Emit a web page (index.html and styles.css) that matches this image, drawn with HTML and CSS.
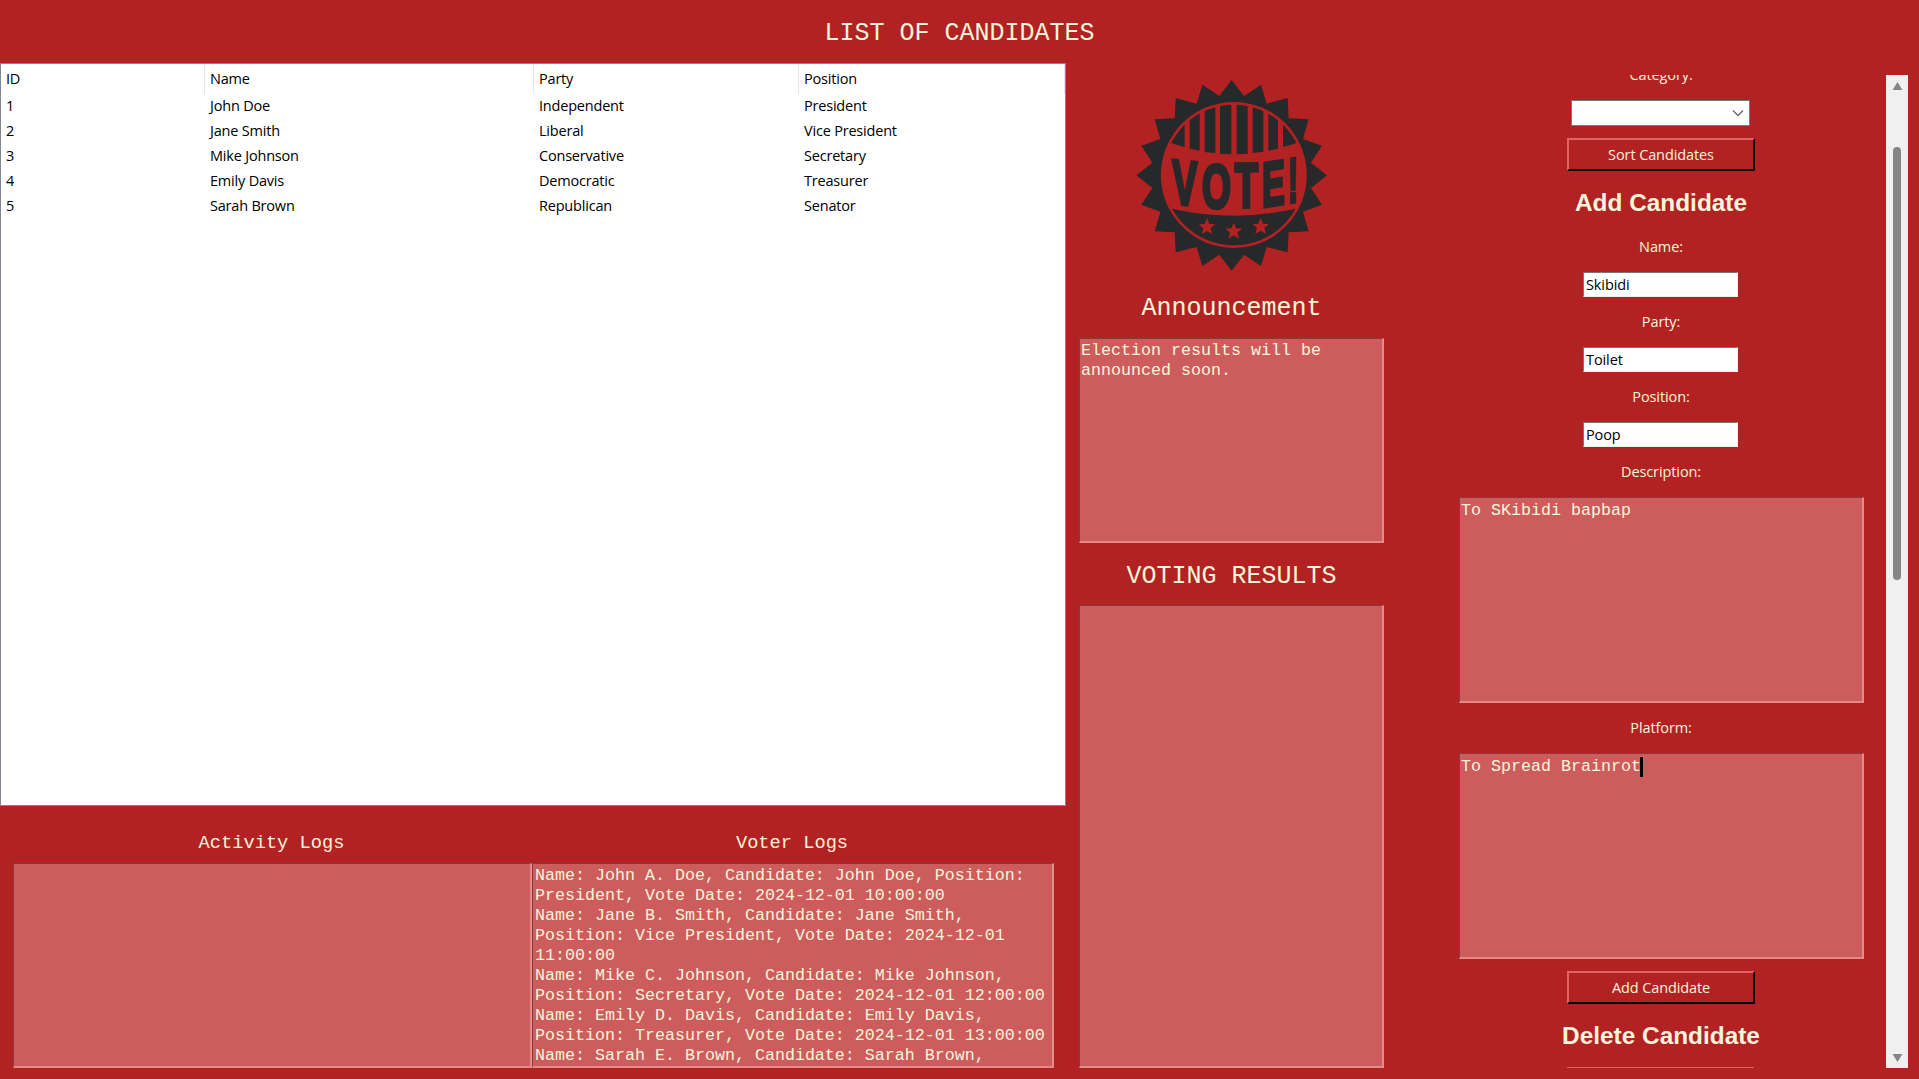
FILE: index.html
```html
<!DOCTYPE html>
<html lang="en">
<head>
<meta charset="utf-8">
<title>List of Candidates</title>
<link rel="stylesheet" href="styles.css">
</head>
<body>
<div class="app">
  <h1 class="title">LIST OF CANDIDATES</h1>
  <main class="columns">
    <section class="left">
      <div class="tree">
        <div class="tree-row tree-head"><span>ID</span><span>Name</span><span>Party</span><span>Position</span></div>
        <div class="tree-row"><span>1</span><span>John Doe</span><span>Independent</span><span>President</span></div>
        <div class="tree-row"><span>2</span><span>Jane Smith</span><span>Liberal</span><span>Vice President</span></div>
        <div class="tree-row"><span>3</span><span>Mike Johnson</span><span>Conservative</span><span>Secretary</span></div>
        <div class="tree-row"><span>4</span><span>Emily Davis</span><span>Democratic</span><span>Treasurer</span></div>
        <div class="tree-row"><span>5</span><span>Sarah Brown</span><span>Republican</span><span>Senator</span></div>
      </div>
      <div class="logs">
        <div class="log">
          <h3 class="log-title">Activity Logs</h3>
          <div class="textbox"></div>
        </div>
        <div class="log">
          <h3 class="log-title">Voter Logs</h3>
          <div class="textbox voter">Name: John A. Doe, Candidate: John Doe, Position:
President, Vote Date: 2024-12-01 10:00:00
Name: Jane B. Smith, Candidate: Jane Smith,
Position: Vice President, Vote Date: 2024-12-01
11:00:00
Name: Mike C. Johnson, Candidate: Mike Johnson,
Position: Secretary, Vote Date: 2024-12-01 12:00:00
Name: Emily D. Davis, Candidate: Emily Davis,
Position: Treasurer, Vote Date: 2024-12-01 13:00:00
Name: Sarah E. Brown, Candidate: Sarah Brown,</div>
        </div>
      </div>
    </section>

    <section class="middle">
      <svg class="badge" viewBox="45 27 579 577" aria-label="Vote">
        <defs>
          <clipPath id="disc"><circle cx="341.5" cy="315" r="211"/></clipPath>
          <path id="star" d="M0-26 7-9 25-8 11 3.500 16 22 0 12-16 22-11 3.500-25-8-7-9z"/>
        </defs>
        <path class="ink" d="M335 30 372 78 423 44 440 101 503 84 506 145 566 148 549 207 606 227 573 278 621 316 573 354 606 404 549 425 566 484 506 487 503 547 440 531 423 588 372 554 335 602 298 554 247 588 230 531 167 547 164 487 104 484 121 425 64 404 97 354 49 316 97 278 64 227 121 207 104 148 164 145 167 84 230 101 247 44 298 78z"/>
        <circle class="paper" cx="341.500" cy="315" r="219"/>
        <g clip-path="url(#disc)">
          <path class="ink" d="M120 90H194V231Q172 226 153 219L120 219zM209 90H239V242L209 236zM254 90H286V250L254 246zM300 90H334V253L300 252zM350 90H383V251L350 253zM398 90H430V245L398 249zM445 90H474V236L445 242zM489 90H560V219H529Q510 226 489 231z"/>
          <path class="ink" d="M120 404 157 416Q341 458 527 416L560 404V560H120z"/>
        </g>
        <use class="paper" href="#star" x="261" y="471"/>
        <use class="paper" href="#star" x="341" y="484"/>
        <use class="paper" href="#star" x="422" y="470"/>
        <g class="vote">
          <text transform="translate(157 400) skewY(6)" textLength="75" lengthAdjust="spacingAndGlyphs">V</text>
          <text transform="translate(246 413)" textLength="87" lengthAdjust="spacingAndGlyphs">O</text>
          <text transform="translate(344.5 412) skewY(-1)" textLength="70" lengthAdjust="spacingAndGlyphs">T</text>
          <text transform="translate(425.5 411) skewY(-9)" textLength="68" lengthAdjust="spacingAndGlyphs">E</text>
          <text transform="translate(503 398) skewY(-7)" textLength="30" lengthAdjust="spacingAndGlyphs">!</text>
        </g>
      </svg>
      <h2 class="heading announcement-title">Announcement</h2>
      <div class="textbox announcement">Election results will be
announced soon.</div>
      <h2 class="heading results-title">VOTING RESULTS</h2>
      <div class="textbox results"></div>
    </section>

    <section class="right">
      <div class="form">
        <span class="label category">Category:</span>
        <div class="combo"><svg viewBox="0 0 12 8"><path d="M1 1.500 6 6.500 11 1.500"/></svg></div>
        <div class="button">Sort Candidates</div>
        <h2 class="form-title">Add Candidate</h2>
        <span class="label">Name:</span>
        <div class="entry">Skibidi</div>
        <span class="label">Party:</span>
        <div class="entry">Toilet</div>
        <span class="label">Position:</span>
        <div class="entry">Poop</div>
        <span class="label">Description:</span>
        <div class="textbox area">To SKibidi bapbap</div>
        <span class="label label-platform">Platform:</span>
        <div class="textbox area">To Spread Brainrot<i class="caret"></i></div>
        <div class="button">Add Candidate</div>
        <h2 class="form-title">Delete Candidate</h2>
        <div class="button"></div>
      </div>
      <div class="scrollbar">
        <svg class="arrow" viewBox="0 0 12 9"><path d="M6 0 11.500 9H.5z"/></svg>
        <div class="thumb"></div>
        <svg class="arrow arrow-down" viewBox="0 0 12 9"><path d="M.5 0H11.500L6 9z"/></svg>
      </div>
    </section>
  </main>
</div>
</body>
</html>
```
FILE: styles.css
```css
* { box-sizing: border-box; }
body {
  margin: 0;
  background: #b22222;
  color: #f5f5dc;
  font-family: "Open Sans", "Noto Sans", sans-serif;
  font-size: 14.5px;
  letter-spacing: -0.1px;
}
h1, h2, h3 { margin: 0; font-weight: 400; letter-spacing: 0; }
.app {
  width: 1919px;
  height: 1079px;
  display: flex;
  flex-direction: column;
  overflow: hidden;
}
.title, .heading {
  font: 25px/28px "Liberation Mono", monospace;
  text-align: center;
}
.title { height: 63px; padding-top: 20px; flex: none; }
.columns {
  flex: 1;
  display: grid;
  grid-template-columns: 1066px 331px 1fr;
  min-height: 0;
}

.left { display: flex; flex-direction: column; min-height: 0; }
.tree {
  height: 743px;
  flex: none;
  background: #fff;
  border: 1px solid #828790;
  color: #000;
  letter-spacing: -0.2px;
}
.tree-row {
  display: grid;
  grid-template-columns: 204px 329px 265px 1fr;
  height: 25px;
  line-height: 23px;
}
.tree-row span { padding-left: 5px; }
.tree-head { height: 30px; line-height: 29px; }
.tree-head span { border-right: 1px solid #e5e5e5; }

.logs {
  display: grid;
  grid-template-columns: 519px 522px;
  padding: 22px 12px 0 13px;
}
.log-title {
  font: 18.7px/28px "Liberation Mono", monospace;
  height: 35px;
  padding: 1px 2px 0 0;
  text-align: center;
}
.textbox {
  height: 205px;
  padding: 2px 1px;
  background: #cd5c5c;
  border: 2px solid;
  border-width: 1px 2px 2px 1px;
  border-color: #853b3b #e68a8a #e68a8a #853b3b;
  font: 16.67px/20px "Liberation Mono", "Courier New", monospace;
  letter-spacing: 0;
  white-space: pre;
  overflow: hidden;
}
.voter { padding-left: 2px; }

.middle {
  display: flex;
  flex-direction: column;
  padding: 16px 13px 0;
}
.badge { width: 193px; height: 192.300px; align-self: center; margin-right: 1px; flex: none; }
.ink { fill: #27282a; }
.paper { fill: #b22222; }
.vote text {
  font: 700 188px "Liberation Sans", sans-serif;
  letter-spacing: 0;
  fill: #27282a;
  stroke: #27282a;
  stroke-width: 11;
}
.announcement-title { margin-top: 22px; height: 45px; padding-top: 2px; }
.announcement { height: 205px; flex: none; }
.results-title { padding-top: 20px; height: 62px; }
.results { height: 463px; flex: none; }

.right { display: flex; padding: 12px 11px 11px 62px; min-height: 0; }
.form {
  flex: none;
  width: 405px;
  height: 993px;
  display: flex;
  flex-direction: column;
  align-items: center;
  overflow: hidden;
}
.form > * { flex: none; }
.label { height: 50px; line-height: 50px; margin-right: 1px; }
.category { height: 37px; line-height: 23px; margin-top: -12px; }
.combo {
  width: 179px;
  height: 26px;
  margin-right: 2px;
  background: #fff;
  border: 1px solid #7a7a7a;
  display: flex;
  align-items: center;
  justify-content: flex-end;
  padding-right: 5px;
}
.combo svg { width: 12px; height: 8px; fill: none; stroke: #666; stroke-width: 1.300; }
.button {
  width: 188px;
  height: 33px;
  margin: 12px 1px 0 0;
  border: 2px solid;
  border-color: #e36363 #000 #000 #e36363;
  text-align: center;
  line-height: 29px;
}
.form-title {
  font: 700 24.400px/28px "Liberation Sans", Arial, sans-serif;
  height: 51px;
  padding: 18px 1px 0 0;
}
.entry {
  width: 155px;
  height: 25px;
  margin-right: 2px;
  background: #fff;
  border: 1px solid;
  border-color: #777 #eee #eee #777;
  color: #000;
  line-height: 23px;
  padding-left: 2px;
}
.area { align-self: stretch; height: 206px; padding-top: 3px; }
.caret { display: inline-block; width: 3px; height: 20px; margin-left: -1px; background: #000; vertical-align: top; }

.scrollbar {
  width: 22px;
  height: 993px;
  margin-left: auto;
  background: #f0f0f0;
  display: flex;
  flex-direction: column;
  align-items: center;
}
.arrow { width: 11px; height: 8px; margin-top: 7px; fill: #858585; flex: none; }
.thumb { width: 8px; height: 433px; margin-top: 57px; border-radius: 4px; background: #858585; }
.arrow-down { margin: auto 0 6px; }
```
